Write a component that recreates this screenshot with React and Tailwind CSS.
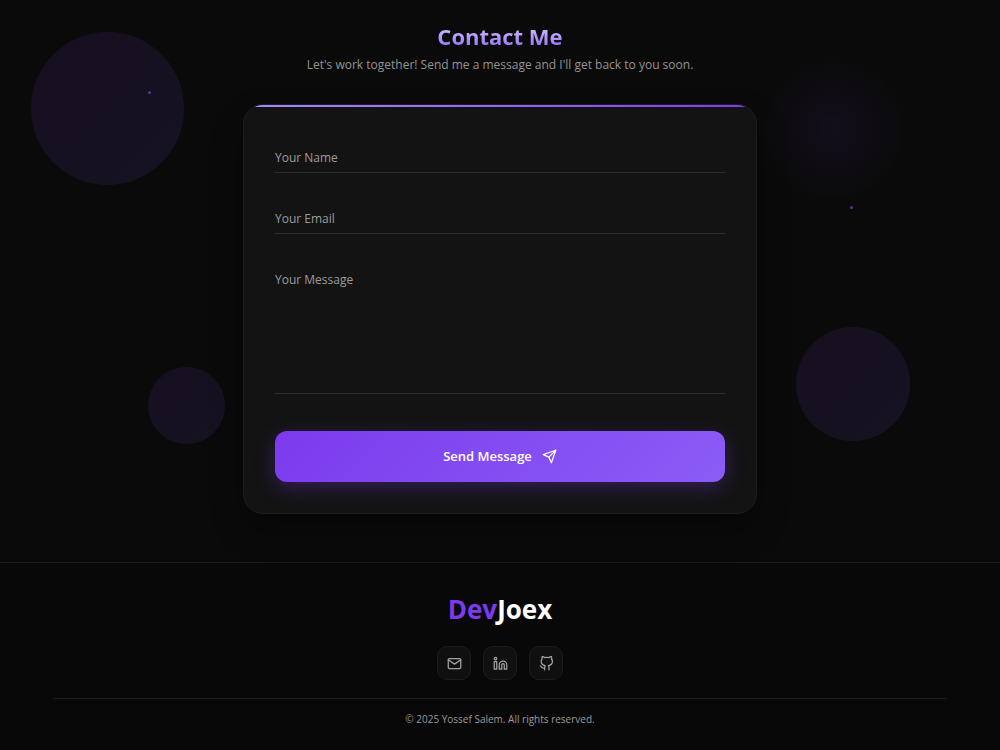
import React, { useState } from "react";
import { FiGithub, FiLinkedin, FiMail, FiSend } from "react-icons/fi";

const socials = [
  { name: "Email", href: "#email", Icon: FiMail },
  { name: "LinkedIn", href: "#linkedin", Icon: FiLinkedin },
  { name: "GitHub", href: "#github", Icon: FiGithub },
];

const fieldClass =
  "peer block w-full bg-transparent border-b border-[#2b2b2b] pt-2 text-xs text-white outline-none focus:border-[#8b5cf6]";

const labelClass =
  "absolute left-0 top-2 text-xs leading-4 text-[#9c9c9c] pointer-events-none transition-all peer-focus:-top-2 peer-focus:text-[#a78bfa] peer-[:not(:placeholder-shown)]:-top-2";

const Background = () => (
  <div className="absolute inset-0 overflow-hidden pointer-events-none" aria-hidden="true">
    <div className="absolute left-[3%] top-8 ml-px size-[153px] rounded-full bg-linear-135 from-[#7c3aed] to-[#8b5cf6] opacity-10" />
    <div className="absolute right-[9%] top-[327px] size-[114px] rounded-full bg-linear-135 from-[#7c3aed] to-[#8b5cf6] opacity-10" />
    <div className="absolute left-[15%] top-[367px] -ml-0.5 size-[77px] rounded-full bg-linear-135 from-[#7c3aed] to-[#8b5cf6] opacity-10" />
    {/* soft glow */}
    <div className="absolute right-[9%] top-[53px] size-[153px] rounded-full bg-[radial-gradient(circle,#7c3aed_0%,transparent_70%)] opacity-8" />
    {/* particles */}
    <div className="absolute left-[15%] top-[91px] -ml-0.5 size-[3px] rounded-full bg-[#7c3aed] opacity-70" />
    <div className="absolute left-[85%] top-[206px] size-[3px] rounded-full bg-[#7c3aed] opacity-70" />
  </div>
);

const Contact = () => {
  const [form, setForm] = useState({ name: "", email: "", message: "" });

  const handleChange = (e) => {
    setForm({ ...form, [e.target.name]: e.target.value });
  };

  const handleSubmit = (e) => {
    e.preventDefault();
    setForm({ name: "", email: "", message: "" });
  };

  return (
    <section className="relative px-4 pt-5 pb-12">
      <Background />

      <div className="relative text-center mb-[31px]">
        <h2 className="text-[22px] leading-8 font-bold bg-linear-to-b from-[#e9d5ff] to-[#8b5cf6] bg-clip-text text-transparent">
          Contact Me
        </h2>
        <p className="mt-[5px] text-xs leading-4 text-[#949494]">
          Let's work together! Send me a message and I'll get back to you soon.
        </p>
      </div>

      {/* Form card */}
      <form
        onSubmit={handleSubmit}
        className="relative mx-auto max-w-[514px] overflow-hidden rounded-[20px] border border-[#1e1c22] bg-[#131313] px-[31px] pt-[37px] pb-[31px] shadow-[0_16px_32px_rgba(0,0,0,0.3)]"
      >
        <div className="absolute inset-x-0 top-0 h-0.5 bg-linear-to-r from-[#a78bfa] to-[#7c3aed]" />

        <div className="relative mb-[30px]">
          <input
            id="name"
            name="name"
            type="text"
            placeholder=" "
            value={form.name}
            onChange={handleChange}
            className={`${fieldClass} h-[31px]`}
          />
          <label htmlFor="name" className={labelClass}>
            Your Name
          </label>
        </div>

        <div className="relative mb-[30px]">
          <input
            id="email"
            name="email"
            type="email"
            placeholder=" "
            value={form.email}
            onChange={handleChange}
            className={`${fieldClass} h-[31px]`}
          />
          <label htmlFor="email" className={labelClass}>
            Your Email
          </label>
        </div>

        <div className="relative mb-[37px]">
          <textarea
            id="message"
            name="message"
            placeholder=" "
            value={form.message}
            onChange={handleChange}
            className={`${fieldClass} h-[130px] resize-none`}
          />
          <label htmlFor="message" className={labelClass}>
            Your Message
          </label>
        </div>

        <button
          type="submit"
          className="flex h-[51px] w-full items-center justify-center gap-2.5 rounded-xl bg-linear-135 from-[#7c3aed] to-[#8b5cf6] text-[13px] font-semibold text-white shadow-[0_6px_20px_rgba(124,58,237,0.3)] cursor-pointer"
        >
          <span>Send Message</span>
          <FiSend className="size-[15px]" />
        </button>
      </form>
    </section>
  );
};

const Footer = () => (
  <footer className="flex-1 border-t border-[#1b1b1b] bg-[#080808] px-[53px] text-center">
    <div className="pt-7 text-[26px] leading-9 font-bold text-white">
      <span className="text-[#7c3aed]">Dev</span>Joex
    </div>

    <div className="mt-[19px] flex justify-center gap-3">
      {socials.map(({ name, href, Icon }) => (
        <a
          key={name}
          href={href}
          aria-label={name}
          className="flex size-[34px] items-center justify-center rounded-[10px] border border-[#1c1c1c] bg-[#101010] text-[#a3a3a3] hover:text-[#a78bfa]"
        >
          <Icon className="size-[15px]" />
        </a>
      ))}
    </div>

    <div className="mt-[18px] border-t border-[#1c1c1c] pt-3 pb-6">
      <p className="text-[10px] leading-4 text-[#9a9a9a]">
        © 2025 Yossef Salem. All rights reserved.
      </p>
    </div>
  </footer>
);

const App = () => {
  return (
    <div className="flex min-h-screen flex-col bg-[#0a0a0a] font-['Open_Sans','Noto_Sans',sans-serif]">
      <Contact />
      <Footer />
    </div>
  );
};

export default App;
